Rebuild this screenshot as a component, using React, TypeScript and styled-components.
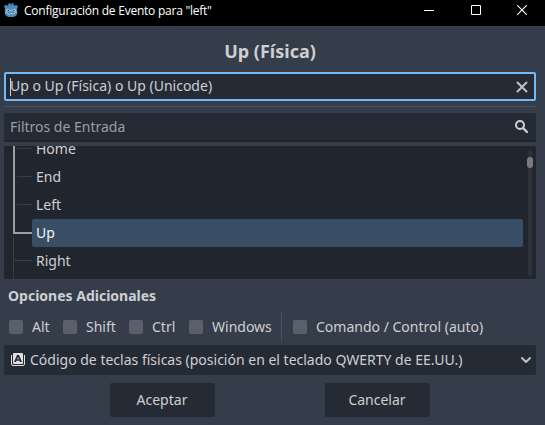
import React from "react";
import styled, { createGlobalStyle, css } from "styled-components";

const GlobalStyle = createGlobalStyle`
  *, *::before, *::after { box-sizing: border-box; }
  body { margin: 0; background: #363d4a; overflow: hidden; }
`;

const Window = styled.main`
  width: 545px;
  height: 425px;
  background: #363d4a;
  color: #cdcfd2;
  font: 14px/20px "Noto Sans", sans-serif;
  white-space: nowrap;
  overflow: hidden;
`;

const TitleBar = styled.header`
  display: flex;
  align-items: flex-start;
  height: 26px;
  padding-left: 4px;
  background: #000;
  color: #fff;
`;

const AppIcon = styled.svg`
  width: 14px;
  height: 15px;
  margin-top: 3px;
`;

const WindowTitle = styled.span`
  flex: 1;
  padding-left: 6px;
  font: 12px/22px "Open Sans", sans-serif;
  letter-spacing: -0.24px;
`;

const WindowControls = styled.div`
  display: flex;
  justify-content: space-between;
  width: 137px;
  padding: 5px 18px 0 16px;
`;

const Content = styled.div`
  display: flex;
  flex-direction: column;
  padding: 0 9px 0 4px;
`;

const EventName = styled.h1`
  height: 46px;
  margin: 0;
  font-size: 18px;
  line-height: 50px;
  font-weight: 700;
  text-align: center;
`;

const Field = styled.div<{ $focused?: boolean }>`
  display: flex;
  align-items: center;
  height: 29px;
  padding: 0 7px 0 6px;
  border-radius: 2px;
  background: #252b34;
  ${({ $focused }) =>
    $focused
      ? css`
          color: #cdcfd2;
          box-shadow: inset 0 0 0 2px #70bafa;
        `
      : css`
          color: #9b9ea3;
          border-bottom: 2px solid #1e232a;
        `}
`;

const FieldText = styled.span`
  flex: 1;
`;

const EditableText = styled(FieldText)`
  padding-bottom: 2px;
`;

const Caret = styled.i`
  width: 1px;
  height: 18px;
  margin-right: -1px;
  background: #cdcfd2;
`;

const Separator = styled.hr`
  width: 534px;
  height: 1px;
  margin: 5px 0 6px -1px;
  border: 0;
  background: #4a505c;
`;

const Tree = styled.section`
  display: grid;
  grid-template-columns: 28px 491px 13px;
  height: 133px;
  margin-top: 4px;
  border-radius: 2px;
  background: #21262e;
  overflow: hidden;
`;

const TreeItems = styled.ul`
  margin: -11px 0 0;
  padding: 0;
  list-style: none;
`;

const TreeItem = styled.li<{ $selected?: boolean }>`
  height: 28px;
  padding-left: 4px;
  line-height: 27px;
  border-radius: 2px;
  background: ${({ $selected }) => ($selected ? "#384e65" : "transparent")};
  color: ${({ $selected }) => ($selected ? "#f2f4f6" : "#cdcfd2")};
`;

const ScrollTrack = styled.div`
  width: 4px;
  height: 126px;
  margin: 4px 0 0 5px;
  padding-top: 7px;
  border-radius: 2px;
  background: #2d3239;
`;

const ScrollThumb = styled.div`
  width: 6px;
  height: 11px;
  margin-left: -1px;
  border-radius: 3px;
  background: #777a7f;
`;

const SectionTitle = styled.h2`
  height: 34px;
  margin: 0;
  padding-left: 4px;
  font-size: 14px;
  line-height: 34px;
  font-weight: 700;
`;

const Modifiers = styled.div`
  display: grid;
  grid-template-columns: 54px 66px 60px 92px 12px 1fr;
  align-items: center;
  height: 28px;
  padding-left: 5px;
`;

const Modifier = styled.label`
  display: flex;
  align-items: center;
  gap: 9px;
`;

const Box = styled.i`
  width: 14px;
  height: 14px;
  border-radius: 2px;
  background: #596069;
`;

const VerticalRule = styled.i`
  width: 1px;
  height: 28px;
  background: #4d535e;
`;

const KeyMode = styled.div`
  display: flex;
  align-items: center;
  height: 30px;
  margin-top: 4px;
  padding: 0 3px 0 6px;
  border-radius: 2px;
  background: #252b34;
`;

const KeyModeText = styled.span`
  flex: 1;
  padding-left: 4px;
`;

const Actions = styled.footer`
  display: flex;
  gap: 110px;
  padding: 8px 0 0 106px;
`;

const ActionButton = styled.button`
  width: 105px;
  height: 34px;
  padding: 0 1px 1px 0;
  border: 0;
  border-radius: 2px;
  background: #252b34;
  color: inherit;
  font: inherit;
`;

const GodotIcon = () => (
  <AppIcon viewBox="0 2 16 17" preserveAspectRatio="none">
    <path
      d="M1 8 0 6l2-2 2 1 1-.7L5 2.5 7 2l.5 1.7h1L9 2l2 .5v1.8l1 .7 2-1 2 2-1 2v5.5c0 2.7-3 4.5-7 4.5s-7-1.8-7-4.5Z"
      fill="#478cbf"
    />
    <path d="M1 12.5 4 13l.4 1.5 2.2.2.4-1h2l.4 1 2.2-.2.4-1.5 3-.5" fill="none" stroke="#b9d4e8" strokeWidth=".8" />
    <circle cx="4.500" cy="10.300" r="1.900" fill="#d5e2eb" />
    <circle cx="11.500" cy="10.300" r="1.900" fill="#d5e2eb" />
    <circle cx="4.800" cy="10.400" r="1.100" fill="#414042" />
    <circle cx="11.200" cy="10.400" r="1.100" fill="#414042" />
    <path d="M8 9.500v2" stroke="#d5e2eb" />
  </AppIcon>
);

const TreeGuides = () => (
  <svg width="28" height="133" viewBox="0 0 28 133" shapeRendering="crispEdges" fill="none">
    <path d="M13 2.500h15M13 30.500h15M13 58.500h15M9 114.500h19M9.500 90v43" stroke="#393e45" />
    <path d="M10 0v87h18" stroke="#9b9ea2" strokeWidth="2" />
  </svg>
);

const keys = ["Home", "End", "Left", "Up", "Right"];
const modifiers = ["Alt", "Shift", "Ctrl", "Windows"];

export default function App() {
  return (
    <>
      <GlobalStyle />
      <Window>
        <TitleBar>
          <GodotIcon />
          <WindowTitle>Configuración de Evento para "left"</WindowTitle>
          <WindowControls>
            <svg width="10" height="10"><path d="M0 5.500h10" stroke="#fff" /></svg>
            <svg width="10" height="10"><path d="M.5.5h9v9h-9z" fill="none" stroke="#fff" /></svg>
            <svg width="10" height="10"><path d="m.2.2 9.6 9.6m0-9.600L.2 9.800" stroke="#fff" strokeWidth="1.100" /></svg>
          </WindowControls>
        </TitleBar>
        <Content>
          <EventName>Up (Física)</EventName>
          <Field $focused>
            <Caret />
            <EditableText>Up o Up (Física) o Up (Unicode)</EditableText>
            <svg width="14" height="14"><path d="m2.500 2.500 9 9m0-9-9 9" stroke="#bec0c4" strokeWidth="2" strokeLinecap="round" /></svg>
          </Field>
          <Separator />
          <Field>
            <FieldText>Filtros de Entrada</FieldText>
            <svg width="15" height="15" fill="none" stroke="#cdcfd2">
              <circle cx="6" cy="6" r="4" strokeWidth="2" />
              <path d="m9 9 4 4" strokeWidth="2.400" strokeLinecap="round" />
            </svg>
          </Field>
          <Tree>
            <TreeGuides />
            <TreeItems>
              {keys.map((key) => (
                <TreeItem key={key} $selected={key === "Up"}>{key}</TreeItem>
              ))}
            </TreeItems>
            <ScrollTrack><ScrollThumb /></ScrollTrack>
          </Tree>
          <SectionTitle>Opciones Adicionales</SectionTitle>
          <Modifiers>
            {modifiers.map((name) => (
              <Modifier key={name}><Box />{name}</Modifier>
            ))}
            <VerticalRule />
            <Modifier><Box />Comando / Control (auto)</Modifier>
          </Modifiers>
          <KeyMode>
            <svg width="16" height="16" fill="none">
              <path d="M1.500 3v9q0 1.500 1.500 1.500h10q1.500 0 1.500-1.500V3" stroke="#e0e0e0" />
              <path fillRule="evenodd" fill="#e0e0e0" d="M4 1h8q1 0 1 1v9q0 1-1 1H4q-1 0-1-1V2q0-1 1-1Zm3 2-3 7h2l.5-1.300h3L10 10h2L9 3Zm1 2 .9 2.300H7.100Z" />
            </svg>
            <KeyModeText>Código de teclas físicas (posición en el teclado QWERTY de EE.UU.)</KeyModeText>
            <svg width="14" height="14"><path d="m3 5 4 4 4-4" fill="none" stroke="#bec0c4" strokeWidth="2" strokeLinecap="round" strokeLinejoin="round" /></svg>
          </KeyMode>
          <Actions>
            <ActionButton>Aceptar</ActionButton>
            <ActionButton>Cancelar</ActionButton>
          </Actions>
        </Content>
      </Window>
    </>
  );
}
